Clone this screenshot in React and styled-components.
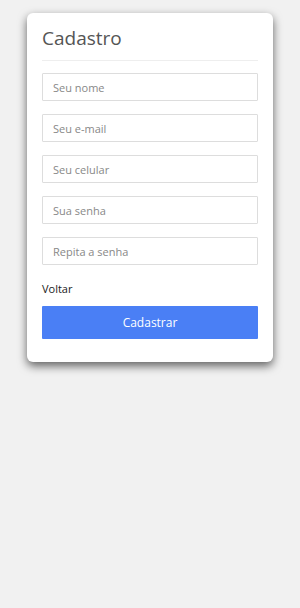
import React from "react";
import styled, { createGlobalStyle } from "styled-components";

const GlobalStyle = createGlobalStyle`
  body {
    margin: 0;
    background: #f1f1f1;
    font-family: "Open Sans", "Liberation Sans", sans-serif;
  }
`;

const Page = styled.div`
  min-height: 608px;
  padding: 13px 27px;
  box-sizing: border-box;
`;

const Card = styled.form`
  background: #ffffff;
  border-radius: 6px;
  box-shadow: 0 4px 10px rgba(0, 0, 0, 0.6);
  padding: 12px 15px 23px;
`;

const Title = styled.h2`
  margin: 0 0 12px;
  font-size: 19px;
  font-weight: 500;
  color: #555555;
  line-height: 26px;
  padding-bottom: 9px;
  border-bottom: 1px solid #eeeeee;
`;

const Fields = styled.div`
  display: flex;
  flex-direction: column;
  gap: 13px;
`;

const Input = styled.input`
  box-sizing: border-box;
  width: 100%;
  height: 28px;
  border: 1px solid #dddddd;
  border-radius: 1px;
  padding: 0 10px;
  font-family: inherit;
  font-size: 11px;
  color: #555;
  outline: none;
  &::placeholder {
    color: #888888;
  }
`;

const Back = styled.a`
  display: block;
  margin-top: 16px;
  font-size: 11px;
  font-weight: 500;
  color: #222222;
  line-height: 16px;
`;

const Button = styled.button`
  display: block;
  width: 100%;
  height: 33px;
  margin-top: 9px;
  border: none;
  border-radius: 1px;
  background: #4a7ff5;
  color: #ffffff;
  font-family: inherit;
  font-size: 12px;
  cursor: pointer;
`;

const fields = [
  { placeholder: "Seu nome", type: "text" },
  { placeholder: "Seu e-mail", type: "email" },
  { placeholder: "Seu celular", type: "tel" },
  { placeholder: "Sua senha", type: "password" },
  { placeholder: "Repita a senha", type: "password" },
];

const App = () => {
  return (
    <Page>
      <GlobalStyle />
      <Card onSubmit={(e) => e.preventDefault()}>
        <Title>Cadastro</Title>
        <Fields>
          {fields.map((f) => (
            <Input key={f.placeholder} type={f.type} placeholder={f.placeholder} />
          ))}
        </Fields>
        <Back>Voltar</Back>
        <Button type="submit">Cadastrar</Button>
      </Card>
    </Page>
  );
};

export default App;
